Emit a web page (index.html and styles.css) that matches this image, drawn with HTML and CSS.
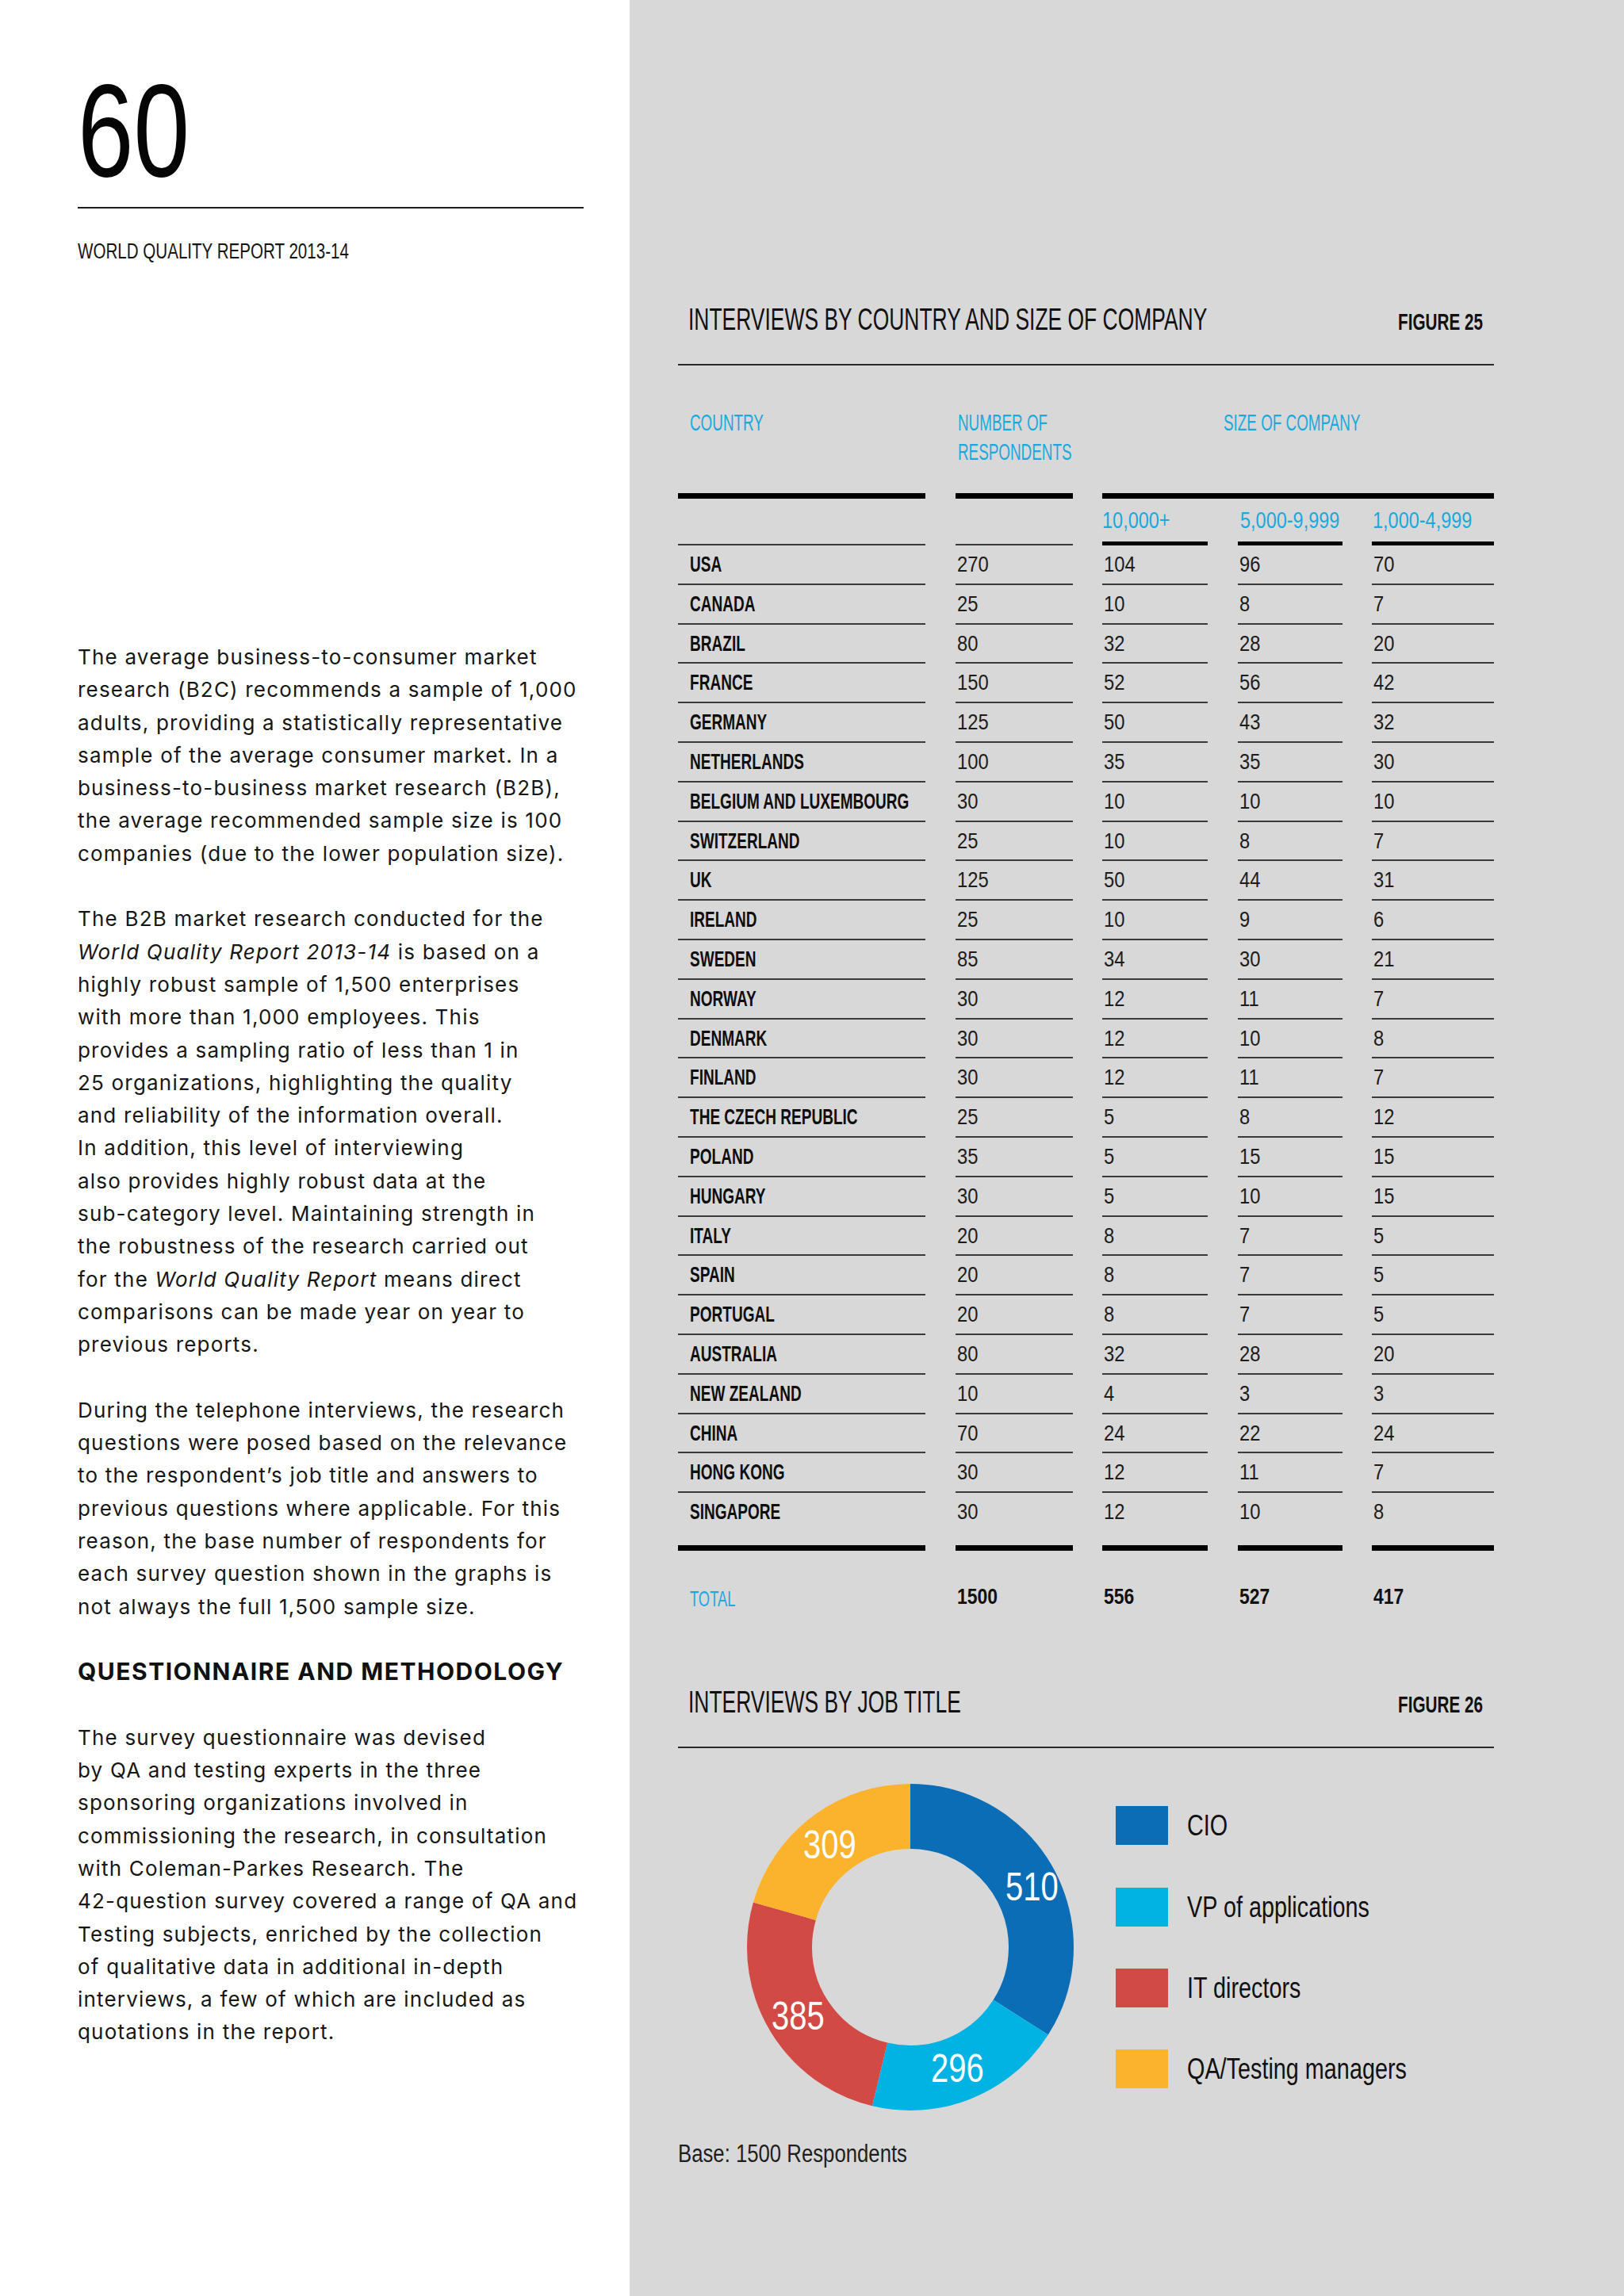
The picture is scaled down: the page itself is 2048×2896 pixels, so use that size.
FILE: index.html
```html
<!DOCTYPE html>
<html lang="en">
<head>
<meta charset="utf-8">
<title>World Quality Report 2013-14 — page 60</title>
<link rel="stylesheet" href="styles.css">
</head>
<body>
<div class="page">
  <aside class="left">
    <div class="folio"><span>60</span></div>
    <div class="folio-rule"></div>
    <div class="running"><span>WORLD QUALITY REPORT 2013-14</span></div>
    <div class="copy">
      <p>The average business-to-consumer market<br>research (B2C) recommends a sample of 1,000<br>adults, providing a statistically representative<br>sample of the average consumer market. In a<br>business-to-business market research (B2B),<br>the average recommended sample size is 100<br>companies (due to the lower population size).</p>
      <p>The B2B market research conducted for the<br><em>World Quality Report 2013-14</em> is based on a<br>highly robust sample of 1,500 enterprises<br>with more than 1,000 employees. This<br>provides a sampling ratio of less than 1 in<br>25 organizations, highlighting the quality<br>and reliability of the information overall.<br>In addition, this level of interviewing<br>also provides highly robust data at the<br>sub-category level. Maintaining strength in<br>the robustness of the research carried out<br>for the <em>World Quality Report</em> means direct<br>comparisons can be made year on year to<br>previous reports.</p>
      <p>During the telephone interviews, the research<br>questions were posed based on the relevance<br>to the respondent’s job title and answers to<br>previous questions where applicable. For this<br>reason, the base number of respondents for<br>each survey question shown in the graphs is<br>not always the full 1,500 sample size.</p>
      <h2>QUESTIONNAIRE AND METHODOLOGY</h2>
      <p>The survey questionnaire was devised<br>by QA and testing experts in the three<br>sponsoring organizations involved in<br>commissioning the research, in consultation<br>with Coleman-Parkes Research. The<br>42-question survey covered a range of QA and<br>Testing subjects, enriched by the collection<br>of qualitative data in additional in-depth<br>interviews, a few of which are included as<br>quotations in the report.</p>
    </div>
  </aside>

  <main class="right">
    <section class="figure">
      <header class="fig-head">
        <h1 class="fig-title"><span>INTERVIEWS BY COUNTRY AND SIZE OF COMPANY</span></h1>
        <span class="fig-num"><span>FIGURE 25</span></span>
      </header>

      <div class="tbl">
        <div class="tr th-main">
          <div class="th th-first"><span class="cy">COUNTRY</span></div>
          <div class="th"><span class="cy">NUMBER OF</span><br><span class="cy">RESPONDENTS</span></div>
          <div class="th th-span"><span class="cy">SIZE OF COMPANY</span></div>
        </div>
        <div class="tr th-sub">
          <div class="ts ts-thin"></div>
          <div class="ts ts-thin"></div>
          <div class="ts ts-thick"><span>10,000+</span></div>
          <div class="ts ts-thick"><span>5,000-9,999</span></div>
          <div class="ts ts-thick"><span>1,000-4,999</span></div>
        </div>

        <div class="tr"><div class="td lab"><span>USA</span></div><div class="td"><span>270</span></div><div class="td"><span>104</span></div><div class="td"><span>96</span></div><div class="td"><span>70</span></div></div>
        <div class="tr"><div class="td lab"><span>CANADA</span></div><div class="td"><span>25</span></div><div class="td"><span>10</span></div><div class="td"><span>8</span></div><div class="td"><span>7</span></div></div>
        <div class="tr"><div class="td lab"><span>BRAZIL</span></div><div class="td"><span>80</span></div><div class="td"><span>32</span></div><div class="td"><span>28</span></div><div class="td"><span>20</span></div></div>
        <div class="tr"><div class="td lab"><span>FRANCE</span></div><div class="td"><span>150</span></div><div class="td"><span>52</span></div><div class="td"><span>56</span></div><div class="td"><span>42</span></div></div>
        <div class="tr"><div class="td lab"><span>GERMANY</span></div><div class="td"><span>125</span></div><div class="td"><span>50</span></div><div class="td"><span>43</span></div><div class="td"><span>32</span></div></div>
        <div class="tr"><div class="td lab"><span>NETHERLANDS</span></div><div class="td"><span>100</span></div><div class="td"><span>35</span></div><div class="td"><span>35</span></div><div class="td"><span>30</span></div></div>
        <div class="tr"><div class="td lab"><span>BELGIUM AND LUXEMBOURG</span></div><div class="td"><span>30</span></div><div class="td"><span>10</span></div><div class="td"><span>10</span></div><div class="td"><span>10</span></div></div>
        <div class="tr"><div class="td lab"><span>SWITZERLAND</span></div><div class="td"><span>25</span></div><div class="td"><span>10</span></div><div class="td"><span>8</span></div><div class="td"><span>7</span></div></div>
        <div class="tr"><div class="td lab"><span>UK</span></div><div class="td"><span>125</span></div><div class="td"><span>50</span></div><div class="td"><span>44</span></div><div class="td"><span>31</span></div></div>
        <div class="tr"><div class="td lab"><span>IRELAND</span></div><div class="td"><span>25</span></div><div class="td"><span>10</span></div><div class="td"><span>9</span></div><div class="td"><span>6</span></div></div>
        <div class="tr"><div class="td lab"><span>SWEDEN</span></div><div class="td"><span>85</span></div><div class="td"><span>34</span></div><div class="td"><span>30</span></div><div class="td"><span>21</span></div></div>
        <div class="tr"><div class="td lab"><span>NORWAY</span></div><div class="td"><span>30</span></div><div class="td"><span>12</span></div><div class="td"><span>11</span></div><div class="td"><span>7</span></div></div>
        <div class="tr"><div class="td lab"><span>DENMARK</span></div><div class="td"><span>30</span></div><div class="td"><span>12</span></div><div class="td"><span>10</span></div><div class="td"><span>8</span></div></div>
        <div class="tr"><div class="td lab"><span>FINLAND</span></div><div class="td"><span>30</span></div><div class="td"><span>12</span></div><div class="td"><span>11</span></div><div class="td"><span>7</span></div></div>
        <div class="tr"><div class="td lab"><span>THE CZECH REPUBLIC</span></div><div class="td"><span>25</span></div><div class="td"><span>5</span></div><div class="td"><span>8</span></div><div class="td"><span>12</span></div></div>
        <div class="tr"><div class="td lab"><span>POLAND</span></div><div class="td"><span>35</span></div><div class="td"><span>5</span></div><div class="td"><span>15</span></div><div class="td"><span>15</span></div></div>
        <div class="tr"><div class="td lab"><span>HUNGARY</span></div><div class="td"><span>30</span></div><div class="td"><span>5</span></div><div class="td"><span>10</span></div><div class="td"><span>15</span></div></div>
        <div class="tr"><div class="td lab"><span>ITALY</span></div><div class="td"><span>20</span></div><div class="td"><span>8</span></div><div class="td"><span>7</span></div><div class="td"><span>5</span></div></div>
        <div class="tr"><div class="td lab"><span>SPAIN</span></div><div class="td"><span>20</span></div><div class="td"><span>8</span></div><div class="td"><span>7</span></div><div class="td"><span>5</span></div></div>
        <div class="tr"><div class="td lab"><span>PORTUGAL</span></div><div class="td"><span>20</span></div><div class="td"><span>8</span></div><div class="td"><span>7</span></div><div class="td"><span>5</span></div></div>
        <div class="tr"><div class="td lab"><span>AUSTRALIA</span></div><div class="td"><span>80</span></div><div class="td"><span>32</span></div><div class="td"><span>28</span></div><div class="td"><span>20</span></div></div>
        <div class="tr"><div class="td lab"><span>NEW ZEALAND</span></div><div class="td"><span>10</span></div><div class="td"><span>4</span></div><div class="td"><span>3</span></div><div class="td"><span>3</span></div></div>
        <div class="tr"><div class="td lab"><span>CHINA</span></div><div class="td"><span>70</span></div><div class="td"><span>24</span></div><div class="td"><span>22</span></div><div class="td"><span>24</span></div></div>
        <div class="tr"><div class="td lab"><span>HONG KONG</span></div><div class="td"><span>30</span></div><div class="td"><span>12</span></div><div class="td"><span>11</span></div><div class="td"><span>7</span></div></div>
        <div class="tr tr-last"><div class="td lab"><span>SINGAPORE</span></div><div class="td"><span>30</span></div><div class="td"><span>12</span></div><div class="td"><span>10</span></div><div class="td"><span>8</span></div></div>

        <div class="tr tr-total">
          <div class="tt tt-label"><span>TOTAL</span></div>
          <div class="tt"><span>1500</span></div>
          <div class="tt"><span>556</span></div>
          <div class="tt"><span>527</span></div>
          <div class="tt"><span>417</span></div>
        </div>
      </div>
    </section>

    <section class="figure fig26">
      <header class="fig-head">
        <h1 class="fig-title"><span>INTERVIEWS BY JOB TITLE</span></h1>
        <span class="fig-num"><span>FIGURE 26</span></span>
      </header>

      <div class="chart">
        <svg class="donut" width="412" height="412" viewBox="0 0 412 412">
          <g transform="rotate(-90 206 206)" fill="none" stroke-width="82">
            <circle cx="206" cy="206" r="165" stroke="#0a6db5" stroke-dasharray="352.49 1036.73" stroke-dashoffset="0"></circle>
            <circle cx="206" cy="206" r="165" stroke="#00b3e3" stroke-dasharray="204.58 1036.73" stroke-dashoffset="-352.49"></circle>
            <circle cx="206" cy="206" r="165" stroke="#d24a45" stroke-dasharray="266.09 1036.73" stroke-dashoffset="-557.07"></circle>
            <circle cx="206" cy="206" r="165" stroke="#fbb32d" stroke-dasharray="213.57 1036.73" stroke-dashoffset="-823.16"></circle>
          </g>
          <g class="donut-labels">
            <text transform="translate(326 147) scale(0.8 1)">510</text>
            <text transform="translate(232 376) scale(0.8 1)">296</text>
            <text transform="translate(31 310) scale(0.8 1)">385</text>
            <text transform="translate(71 94) scale(0.8 1)">309</text>
          </g>
        </svg>
        <ul class="legend">
          <li class="legend-item"><span class="swatch sw-cio"></span><span class="legend-label">CIO</span></li>
          <li class="legend-item"><span class="swatch sw-vp"></span><span class="legend-label">VP of applications</span></li>
          <li class="legend-item"><span class="swatch sw-it"></span><span class="legend-label">IT directors</span></li>
          <li class="legend-item"><span class="swatch sw-qa"></span><span class="legend-label">QA/Testing managers</span></li>
        </ul>
      </div>
      <p class="base"><span>Base: 1500 Respondents</span></p>
    </section>
  </main>
</div>
</body>
</html>
```

FILE: styles.css
```css
html, body {
  margin: 0;
  padding: 0;
}

body {
  background: #ffffff;
  color: #111111;
}

.page {
  display: flex;
  width: 2048px;
  min-height: 2896px;
}

/* condensed display type: Liberation Sans squeezed horizontally */
.folio span,
.running span,
.fig-title span,
.fig-num span,
.cy,
.ts span,
.td span,
.tt span,
.legend-label,
.base span {
  display: inline-block;
  white-space: nowrap;
  transform-origin: 0 50%;
}

/* ---------- left column ---------- */

.left {
  width: 794px;
  flex: none;
  box-sizing: border-box;
  padding: 81px 0 0 98px;
  background: #ffffff;
}

.folio {
  font-family: "Liberation Sans", Arial, sans-serif;
  font-size: 167px;
  line-height: 167px;
  font-weight: 400;
  color: #050505;
}

.folio span {
  transform: scaleX(0.76);
}

.folio-rule {
  width: 638px;
  height: 2px;
  margin-top: 13px;
  background: #1e1e1e;
}

.running {
  margin-top: 33.6px;
  font-family: "Liberation Sans", Arial, sans-serif;
  font-size: 27px;
  line-height: 40px;
  color: #151515;
  white-space: nowrap;
}

.running span {
  transform: scaleX(0.762);
}

.copy {
  margin-top: 471.4px;
  font-family: Inter, "Open Sans", sans-serif;
  font-size: 26px;
  line-height: 41.3px;
  letter-spacing: 1.2px;
  color: #161616;
  white-space: nowrap;
}

.copy p {
  margin: 0 0 41.3px;
}

.copy em {
  font-style: italic;
}

.copy h2 {
  margin: 0 0 41.3px;
  font-family: Inter, "Open Sans", sans-serif;
  font-size: 30px;
  line-height: 41.3px;
  font-weight: 700;
  letter-spacing: 1.5px;
  color: #111111;
}

/* ---------- right column ---------- */

.right {
  flex: 1;
  box-sizing: border-box;
  padding: 377.5px 0 0 61px;
  background: #d9d8d8;
}

.figure {
  width: 1029px;
}

.fig-head {
  display: flex;
  align-items: baseline;
  padding: 0 15px 28.5px 13px;
  border-bottom: 2px solid #2a2a2a;
}

.fig-title {
  flex: 1 1 0;
  min-width: 0;
  margin: 0;
  font-family: "Liberation Sans", Arial, sans-serif;
  font-size: 39px;
  line-height: 50px;
  font-weight: 400;
  color: #111111;
  white-space: nowrap;
}

.fig-title span {
  transform: scaleX(0.678);
}

.fig-num {
  flex: none;
  width: 106px;
  font-family: "Liberation Sans", Arial, sans-serif;
  font-size: 30px;
  line-height: 50px;
  font-weight: 700;
  color: #111111;
  white-space: nowrap;
}

.fig-num span {
  transform: scaleX(0.69);
}

/* table */

.tbl {
  margin-top: 53.5px;
  font-family: "Liberation Sans", Arial, sans-serif;
}

.tr {
  display: grid;
  grid-template-columns: 312px 148px 133px 132px 154px;
  column-gap: 37.5px;
}

.cy {
  color: #1ba9dc;
  transform: scaleX(0.65);
}

.th {
  box-sizing: border-box;
  padding: 0 0 33.5px 3px;
  font-size: 29px;
  line-height: 37px;
  border-bottom: 7px solid #000000;
}

.th-first {
  padding-left: 15px;
}

.th-span {
  grid-column: 3 / 6;
  padding-left: 153px;
}

.th-sub {
  height: 59px;
}

.ts {
  box-sizing: border-box;
  font-size: 29px;
  line-height: 54px;
  color: #1ba9dc;
  white-space: nowrap;
}

.ts span {
  transform: scaleX(0.81);
}

.ts-thin {
  border-bottom: 2px solid #3a3a3a;
}

.ts-thick {
  border-bottom: 5px solid #000000;
}

.ts-thick:nth-child(4) {
  padding-left: 3px;
}

.ts-thick:nth-child(5) {
  padding-left: 1px;
}

.td {
  box-sizing: border-box;
  height: 49.8px;
  padding-left: 2px;
  font-size: 28px;
  line-height: 47.8px;
  color: #1c1c1c;
  border-bottom: 2px solid #3a3a3a;
  white-space: nowrap;
}

.td span {
  transform: scaleX(0.85);
}

.td.lab {
  padding-left: 15px;
}

.td.lab span {
  font-weight: 700;
  color: #0e0e0e;
  transform: scaleX(0.68);
}

.tr-last .td {
  height: 72.8px;
  border-bottom: 7px solid #000000;
}

.tt {
  padding: 33px 0 0 2px;
  font-size: 28px;
  line-height: 50px;
  font-weight: 700;
  color: #111111;
  white-space: nowrap;
}

.tt span {
  transform: scaleX(0.82);
}

.tt-label {
  padding-left: 15px;
  padding-top: 36px;
}

.tt-label span {
  font-weight: 400;
  font-size: 28px;
  color: #1ba9dc;
  transform: scaleX(0.655);
}

/* figure 26 */

.fig26 {
  margin-top: 80px;
}

.chart {
  display: flex;
  align-items: flex-start;
  margin: 45px 0 0 87px;
}

.donut {
  display: block;
  flex: none;
}

.donut-labels text {
  font-family: "Liberation Sans", Arial, sans-serif;
  font-size: 50px;
  fill: #ffffff;
}

.legend {
  list-style: none;
  margin: 28px 0 0 53px;
  padding: 0;
  display: flex;
  flex-direction: column;
  gap: 53.3px;
}

.legend-item {
  display: flex;
  align-items: center;
  height: 49px;
}

.swatch {
  width: 66px;
  height: 49px;
  flex: none;
}

.sw-cio { background: #0a6db5; }
.sw-vp  { background: #00b3e3; }
.sw-it  { background: #d24a45; }
.sw-qa  { background: #fbb32d; }

.legend-label {
  margin-left: 24px;
  font-family: "Liberation Sans", Arial, sans-serif;
  font-size: 36px;
  line-height: 49px;
  color: #111111;
  transform: scaleX(0.8);
}

.base {
  margin: 35px 0 0;
  font-family: "Liberation Sans", Arial, sans-serif;
  font-size: 31px;
  line-height: 40px;
  color: #1e1e1e;
  white-space: nowrap;
}

.base span {
  transform: scaleX(0.83);
}
```
